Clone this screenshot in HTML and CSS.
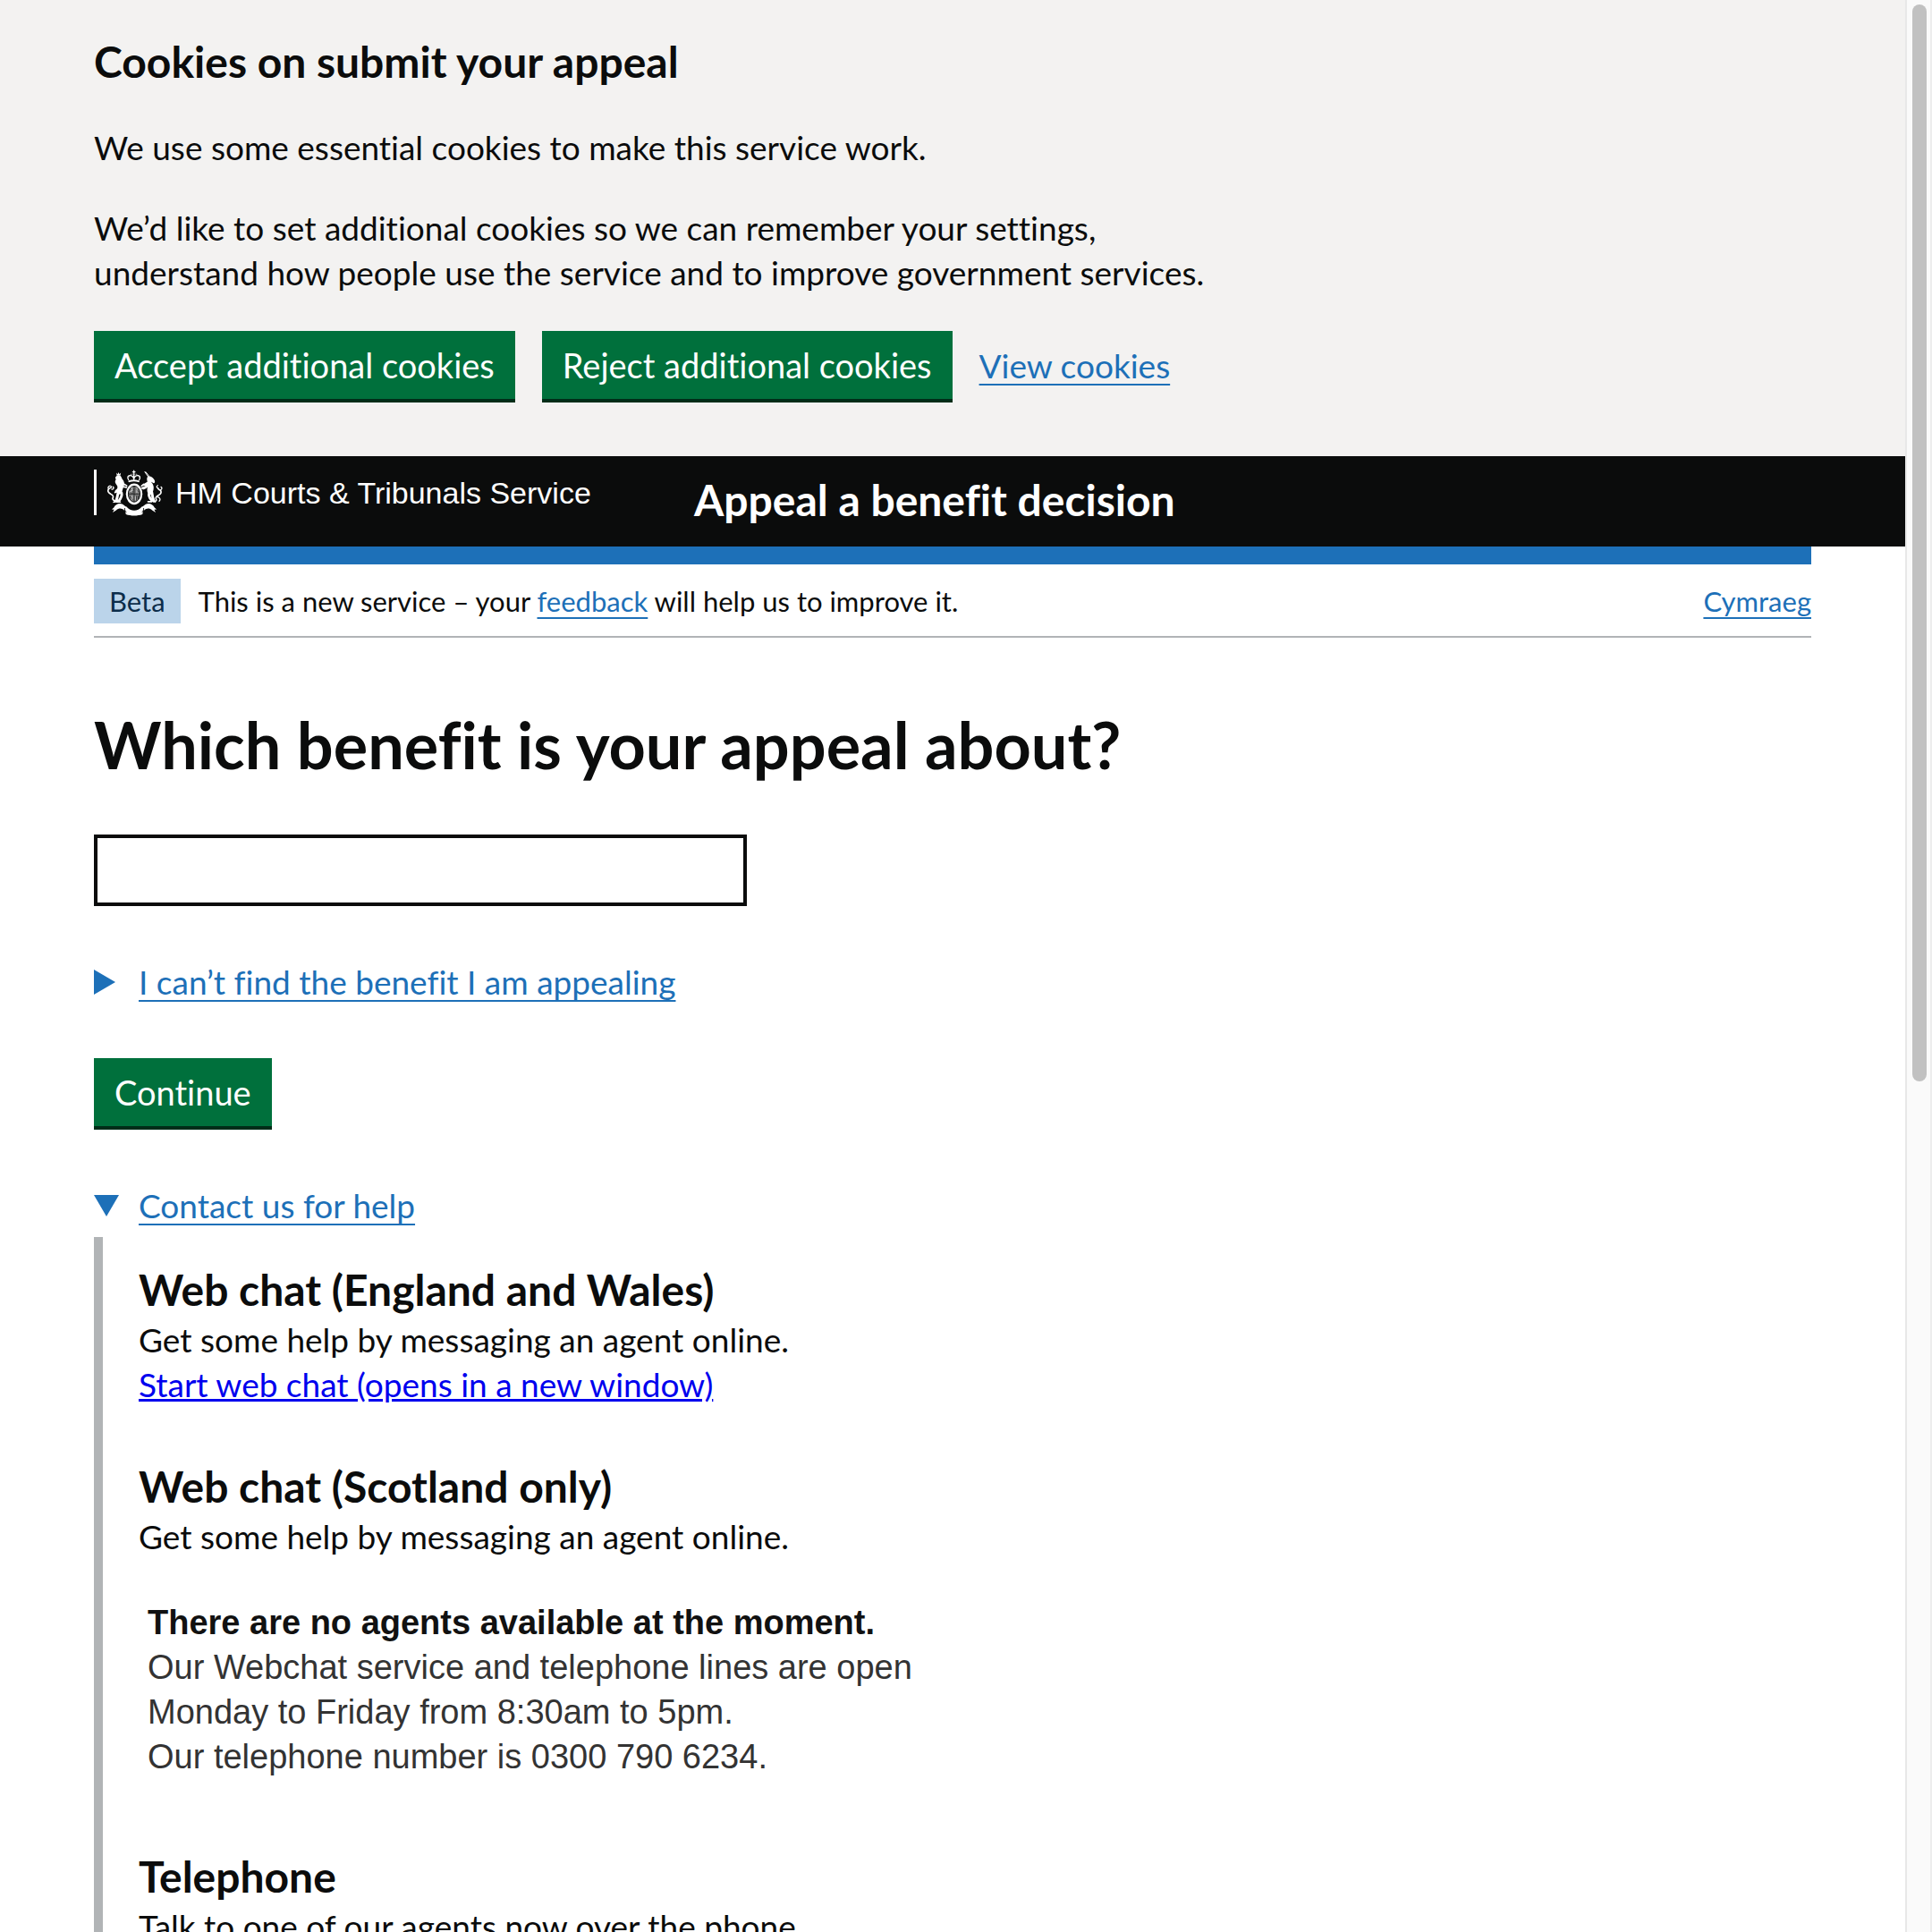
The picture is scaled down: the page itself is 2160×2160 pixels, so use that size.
FILE: index.html
```html
<!DOCTYPE html>
<html lang="en">
<head>
<meta charset="utf-8">
<meta name="viewport" content="width=device-width, initial-scale=1">
<title>Which benefit is your appeal about?</title>
<link rel="stylesheet" href="styles.css">
</head>
<body>
<div class="viewport">
  <div class="page">
    <section class="cookie-banner" aria-label="Cookies on submit your appeal">
      <div class="container">
        <h2 class="heading-m">Cookies on submit your appeal</h2>
        <p>We use some essential cookies to make this service work.</p>
        <p>We’d like to set additional cookies so we can remember your settings,<br>understand how people use the service and to improve government services.</p>
        <div class="button-group">
          <button class="button" type="button">Accept additional cookies</button>
          <button class="button" type="button">Reject additional cookies</button>
          <a class="link" href="#cookies">View cookies</a>
        </div>
      </div>
    </section>

    <header class="header">
      <div class="container header-row">
        <a class="logo" href="#home">
          <svg class="crest" viewBox="60 42 188 156" aria-hidden="true">
            <g fill="none" stroke="#fff" stroke-linecap="round" stroke-linejoin="round">
              <path stroke-width="4" d="M150 45v9M146 49h8M132 76c-5-8-3-15 5-15 6 0 11 4 13 12 2-8 7-12 13-12 8 0 10 7 5 15M150 58v18"/>
              <path stroke-width="6" d="M134 81c10-3 22-3 32 0"/>
              <path stroke-width="3" stroke-dasharray="1 5" d="M133 66c2-9 10-10 17-9 7-1 15 0 17 9"/>
              <path stroke-width="5" d="M91 146c-10 2-15-4-12-10s-2-9-8-12c-7-4-11-10-7-16 3-5 9-4 10-9"/>
              <path stroke-width="4" d="M64 106c-3-4 0-9 6-10M80 100c3 5-1 9-5 8"/>
              <path stroke-width="3" d="M187 49l12 17M190 49l12 15"/>
              <path stroke-width="5" d="M216 147c8 4 12-1 9-7-2-5 2-9 8-12 7-3 11-8 8-15-3-5-9-3-10-9"/>
              <path stroke-width="4" d="M232 104c-6-2-6-7-1-9M241 110c5-2 5-8 1-10M230 134c8 2 12 8 6 14"/>
              <path stroke-width="9" d="M103 98c-3 8-8 14-13 17M100 110c-6 10-4 22-9 34M108 120c3 10-3 20-9 28M194 97c-4 5-8 8-12 7M207 112c8 8 3 20 10 32M203 118c-4 10 0 20 8 28"/>
              <path stroke-width="5" d="M92 151h12M198 150h12M118 91l8 5M117 100l8 2M183 91l-7 6M185 103l-9 1M91 115l-5 4"/>
            </g>
            <g fill="#fff">
              <path d="M91 52l4 5 3-7 3 7 5-5-2 10H92z"/>
              <path d="M90 64c6-5 16-3 18 4 1 5 7 9 9 17 2 7-1 14-4 20-2 8-4 17-11 20-7-1-10-9-8-18 2-8-1-12-5-17-4-6-3-12 1-16-4-1-4-7 0-10z"/>
              <path d="M197 65c8-3 17 2 22 10 3 5 3 9 0 12-4 1-7-4-11-4 5 5 9 11 9 19 0 11-3 19-10 24-8 1-12-8-12-16 0-6 3-10 1-15l-13 2-2-5c5-5 11-6 15-10-2-6-3-12 1-17z"/>
              <path d="M93 142c-7 2-12 6-15 12 6-2 10 1 13-3 3 2 7 0 8-4zM209 142c8 0 15 5 16 11-6-1-11 1-14-4z"/>
              <ellipse cx="151" cy="124" rx="28" ry="36"/>
              <path d="M82 170c6-13 20-17 30-11l16 12c-7 0-10 3-10 9-9-9-19-9-28-1l-12 8 5-10-8-1z"/>
              <path d="M220 170c-6-13-20-17-30-11l-16 12c7 0 10 3 10 9 9-9 19-9 28-1l12 8-5-10 8-1z"/>
              <path d="M124 166c8 10 18 14 27 14s19-4 27-14l6 5-5 22c-16 6-40 6-56 0l-5-22z"/>
            </g>
            <ellipse cx="151" cy="124" rx="20" ry="27" fill="#777" stroke="#0b0c0c" stroke-width="3"/>
            <path fill="none" stroke="#0b0c0c" stroke-width="2" d="M151 98v52M132 124h38M138 106l7 7 5-5M157 106l8 10M137 132l9 11M158 130v16M165 129v12M138 115h10M140 120h8"/>
            <path fill="none" stroke="#fff" stroke-width="2" d="M143 102v17M160 103v17M144 129v14M155 131v15M135 117l12-6"/>
            <path fill="none" stroke="#0b0c0c" stroke-width="3" d="M119 172c-1 6 2 10 5 14M183 172c1 6-2 10-5 14M147 162v7M155 162v7"/>
          </svg>
          <span>HM Courts &amp; Tribunals Service</span>
        </a>
        <a class="service-name" href="#service">Appeal a benefit decision</a>
      </div>
    </header>

    <div class="container">
      <div class="phase-banner">
        <strong class="tag">Beta</strong>
        <span>This is a new service – your <a class="link" href="#feedback">feedback</a> will help us to improve it.</span>
        <a class="link language" href="#cy">Cymraeg</a>
      </div>

      <main class="main">
        <form class="form">
          <h1 class="heading-xl"><label for="benefit">Which benefit is your appeal about?</label></h1>
          <input class="input" id="benefit" name="benefit" type="text">
          <details class="details">
            <summary><span class="link">I can’t find the benefit I am appealing</span></summary>
          </details>
          <button class="button" type="button">Continue</button>
        </form>

        <details class="details" open>
          <summary><span class="link">Contact us for help</span></summary>
          <div class="details-text">
            <section class="contact">
              <h2 class="heading-m">Web chat (England and Wales)</h2>
              <p>Get some help by messaging an agent online.</p>
              <a class="chat-link" href="#chat">Start web chat (opens in a new window)</a>
            </section>
            <section class="contact">
              <h2 class="heading-m">Web chat (Scotland only)</h2>
              <p>Get some help by messaging an agent online.</p>
              <div class="chat-status">
                <strong>There are no agents available at the moment.</strong>
                <span>Our Webchat service and telephone lines are open</span>
                <span>Monday to Friday from 8:30am to 5pm.</span>
                <span>Our telephone number is 0300 790 6234.</span>
              </div>
            </section>
            <section class="contact">
              <h2 class="heading-m">Telephone</h2>
              <p>Talk to one of our agents now over the phone.</p>
            </section>
          </div>
        </details>
      </main>
    </div>
  </div>
  <div class="scrollbar" aria-hidden="true"><div class="thumb"></div></div>
</div>
</body>
</html>
```
FILE: styles.css
```css
* { box-sizing: border-box; }

body {
  margin: 0;
  background: #fff;
  color: #0b0c0c;
  font: 37px/50px Lato, sans-serif;
  font-variant-ligatures: none;
}

h1, h2, p { margin: 0; }

.viewport {
  display: grid;
  grid-template-columns: minmax(0, 1fr) 30px;
  height: 100vh;
  overflow: hidden;
}

.page { overflow: hidden; }

.container {
  max-width: 1920px;
  margin: 0 105px;
}

.heading-m {
  padding-bottom: 2px;
  font-size: 48px;
  line-height: 58px;
  font-weight: 700;
}

.heading-xl {
  padding-bottom: 2px;
  font-size: 72px;
  line-height: 78px;
  font-weight: 700;
}

.link {
  color: #1d70b8;
  text-decoration: underline;
  text-decoration-thickness: 2px;
  text-underline-offset: 6px;
  text-decoration-skip-ink: none;
}

.cookie-banner {
  padding: 40px 0 60px;
  background: #f3f2f1;
}

.cookie-banner .container {
  display: flex;
  flex-direction: column;
  gap: 40px;
}

.button-group { display: flex; align-items: baseline; gap: 30px; }

.button {
  height: 80px;
  padding: 0 23px 4px;
  border: 0;
  border-radius: 0;
  background: #00703c;
  box-shadow: inset 0 -4px 0 #002d18;
  color: #fff;
  font: inherit;
  font-size: 38px;
  font-variant-ligatures: none;
}

.header { background: #0b0c0c; }

.header-row {
  display: flex;
  align-items: flex-start;
  height: 101px;
  padding-top: 15px;
}

.logo {
  display: flex;
  align-items: center;
  flex: 0 0 671px;
  height: 51px;
  border-left: 3px solid #fff;
  color: #fff;
  font: 34px/50px "Liberation Sans", Arial, sans-serif;
  text-decoration: none;
}

.crest { width: 62px; height: 52px; margin: 0 14px 0 12px; }

.service-name {
  padding-top: 4px;
  color: #fff;
  font-size: 48px;
  line-height: 60px;
  font-weight: 700;
  text-decoration: none;
}

.phase-banner {
  display: flex;
  align-items: center;
  gap: 20px;
  padding: 16px 0 14px;
  border-top: 20px solid #1d70b8;
  border-bottom: 2px solid #b1b4b6;
  font-size: 31px;
}

.tag {
  padding: 0 17px;
  background: #bbd4ea;
  color: #0c2d4a;
  font-weight: 400;
}

.language { margin-left: auto; }

.main { padding-top: 80px; }

.form {
  display: flex;
  flex-direction: column;
  align-items: flex-start;
  margin-bottom: 60px;
}

.input {
  width: 730px;
  height: 80px;
  margin: 60px 0;
  padding: 10px;
  border: 4px solid #0b0c0c;
  border-radius: 0;
  font: inherit;
}

.form .details { margin-bottom: 50px; }

.details summary {
  display: flex;
  align-items: center;
  padding-bottom: 10px;
  list-style: none;
}

.details summary::before {
  content: "";
  width: 24px;
  height: 28px;
  margin-right: 26px;
  background: #1d70b8;
  clip-path: polygon(0 0, 100% 50%, 0 100%);
}

.details[open] summary::before {
  width: 28px;
  height: 24px;
  margin-right: 22px;
  clip-path: polygon(0 0, 100% 0, 50% 100%);
}

.details-text {
  display: flex;
  flex-direction: column;
  gap: 60px;
  padding: 30px 0 30px 40px;
  border-left: 10px solid #b1b4b6;
}

.chat-link { color: #00e; }

.chat-status {
  display: flex;
  flex-direction: column;
  padding: 46px 0 20px 10px;
  color: #333;
  font-family: "Liberation Sans", Arial, sans-serif;
  font-size: 38px;
}

.chat-status strong { color: #111; }

.scrollbar {
  padding: 5px 4px 5px 6px;
  border-left: 2px solid #e8e8e8;
  border-right: 2px solid #ededed;
  background: #fafafa;
}

.thumb {
  width: 16px;
  height: 56%;
  border-radius: 8px;
  background: #c1c1c1;
}
```
